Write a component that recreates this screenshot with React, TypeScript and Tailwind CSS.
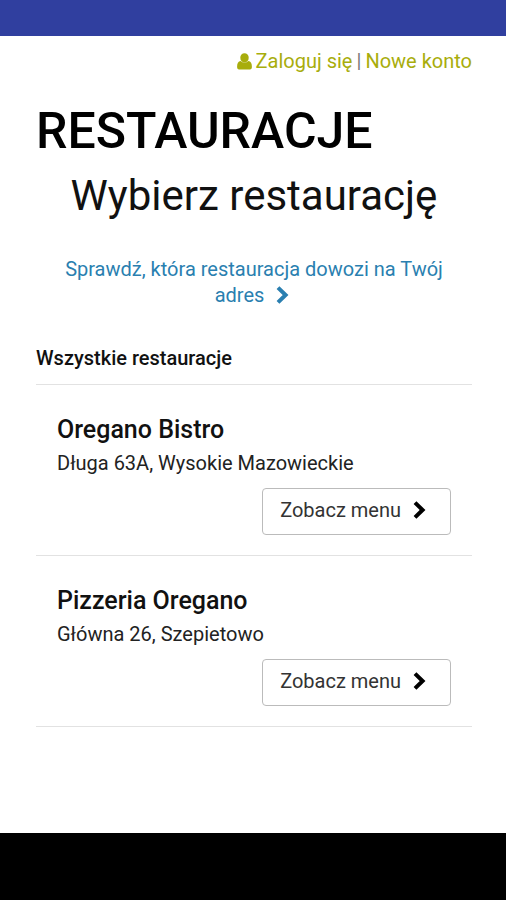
import React from 'react';

interface Restaurant {
  name: string;
  address: string;
}

const restaurants: Restaurant[] = [
  { name: 'Oregano Bistro', address: 'Długa 63A, Wysokie Mazowieckie' },
  { name: 'Pizzeria Oregano', address: 'Główna 26, Szepietowo' },
];

const UserIcon: React.FC = () => (
  <svg viewBox="0 0 15 17" className="h-[17px] w-[15px]" fill="currentColor" aria-hidden="true">
    <path d="M7.5 0.3a4.2 4.2 0 0 1 4.2 4.4a4.4 4.4 0 0 1-1.6 3.7a4.2 4.2 0 0 1-5.2 0a4.4 4.4 0 0 1-1.6-3.7a4.2 4.2 0 0 1 4.2-4.4z" />
    <path d="M3.7 7.9a5.3 5.3 0 0 0 7.6 0c2.6 0.3 3.6 2.3 3.6 5.8c0 1.8-0.6 2.8-2 2.8h-10.8c-1.4 0-2-1-2-2.8c0-3.5 1-5.5 3.6-5.8z" />
  </svg>
);

const ChevronIcon: React.FC<{ className: string }> = ({ className }) => (
  <svg viewBox="0 0 13 18" className={className} fill="none" stroke="currentColor" strokeWidth="4" aria-hidden="true">
    <path d="M2 1.6l7.6 7.4l-7.6 7.4" />
  </svg>
);

const App: React.FC = () => {
  return (
    <div className="flex min-h-screen flex-col bg-white font-['Roboto',sans-serif] text-[#111111]">
      <div className="h-9 bg-[#303f9f]" />

      <main className="flex-1 pr-[34px] pl-9">
        <nav className="flex items-center justify-end gap-1 pt-[11px] text-xl leading-7 text-[#a8ad0c]">
          <a href="#login" className="flex items-center gap-1">
            <UserIcon />
            Zaloguj się
          </a>
          <span className="text-[#777777]">|</span>
          <a href="#register">Nowe konto</a>
        </nav>

        <h1 className="mt-[26px] text-[50px] leading-15 font-medium text-black">RESTAURACJE</h1>
        <h2 className="mt-[7px] text-center text-[42px] leading-14">Wybierz restaurację</h2>

        <a href="#delivery" className="mx-6 mt-8 block text-center text-xl leading-[26px] text-[#2a7fb0]">
          Sprawdź, która restauracja dowozi na Twój adres
          <ChevronIcon className="mr-1 mb-1 ml-3 inline h-[18px] w-[13px]" />
        </a>

        <h3 className="mt-9 border-b border-[#e2e2e2] pb-3 text-xl leading-7 font-medium">Wszystkie restauracje</h3>

        <ul>
          {restaurants.map((restaurant) => (
            <li key={restaurant.name} className="border-b border-[#e2e2e2] px-[21px] pt-7 pb-5">
              <h4 className="text-[25px] leading-[34px] font-medium">{restaurant.name}</h4>
              <p className="text-xl leading-8 text-[#222222]">{restaurant.address}</p>
              <div className="mt-[9px] flex justify-end">
                <button className="flex h-[47px] items-center gap-3 rounded border border-[#bbbbbb] pr-6 pb-1 pl-[17px] text-xl text-[#333333]">
                  Zobacz menu
                  <ChevronIcon className="h-[18px] w-[13px] text-black" />
                </button>
              </div>
            </li>
          ))}
        </ul>
      </main>

      <div className="h-[67px] bg-black" />
    </div>
  );
};

export default App;
